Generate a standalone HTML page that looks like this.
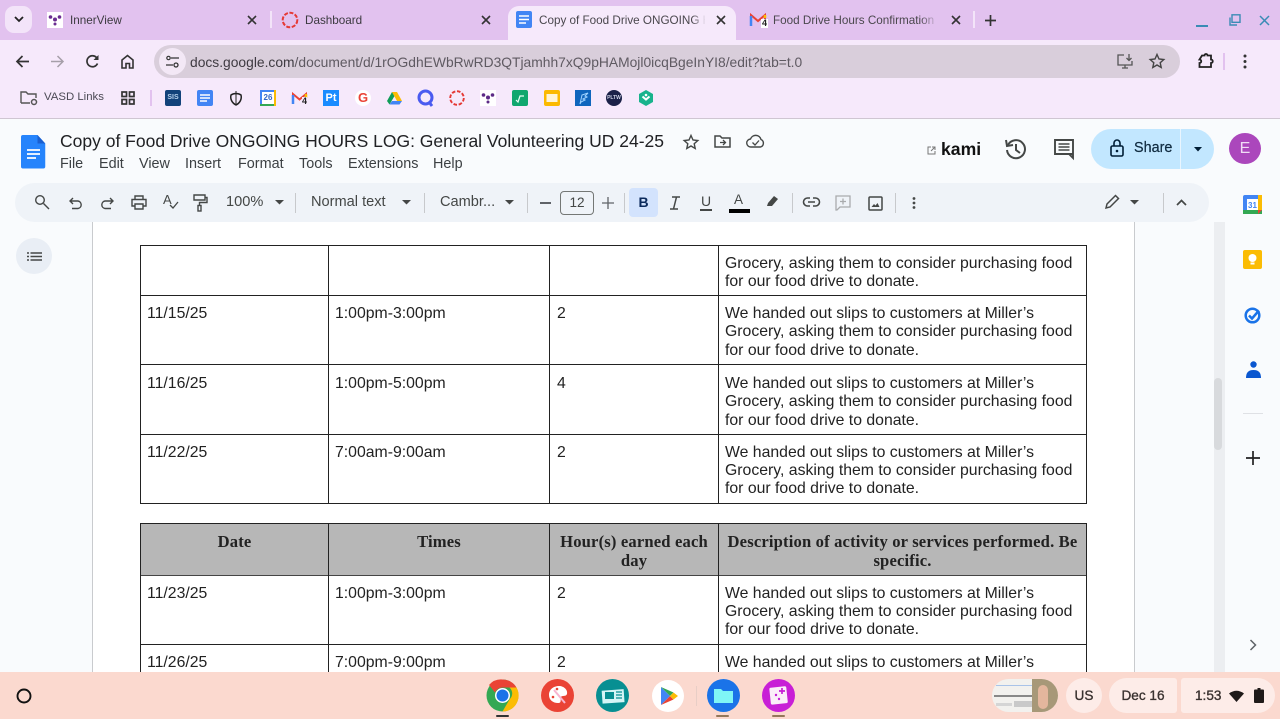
<!DOCTYPE html>
<html><head><meta charset="utf-8"><style>
html,body{margin:0;padding:0;width:1280px;height:719px;overflow:hidden;background:#f9fbfd;font-family:"Liberation Sans",sans-serif;color:#202124}
.a{position:absolute}
.t{position:absolute;white-space:nowrap}
svg{position:absolute;overflow:visible}
.ln{position:absolute;background:#222}
.c{position:absolute;font-size:15.8px;line-height:18.3px;color:#222;white-space:nowrap}
.h{position:absolute;font-family:"Liberation Serif",serif;font-weight:bold;font-size:16.6px;letter-spacing:.16px;line-height:19px;color:#222;text-align:center;white-space:nowrap}
.i{fill:none;stroke:#444746;stroke-width:1.4}
.m{position:absolute;top:156px;font-size:14.4px;color:#3c4043;white-space:nowrap}
.tb{position:absolute;top:194px;font-size:14.6px;color:#444746;white-space:nowrap}
.sep{position:absolute;top:193px;width:1px;height:20px;background:#c7c9cc}
.tab{position:absolute;top:14px;font-size:11.7px;color:#3c3a40;white-space:nowrap}
.st{-webkit-text-stroke:.35px #3a3230;color:#3a3230;font-size:13.6px}
</style></head><body>

<!-- tab strip -->
<div class="a" style="left:0;top:0;width:1280px;height:40px;background:#e2c2ef"></div>
<div class="a" style="left:0;top:40px;width:1280px;height:79px;background:#f6e9fb"></div>
<div class="a" style="left:0;top:118px;width:1280px;height:1px;background:#cfc6d2"></div>
<div class="a" style="left:5px;top:6px;width:27px;height:27px;border-radius:9px;background:#f3e4f9"></div>
<svg style="left:14px;top:16px" width="10" height="7"><path d="M1 1l4 4 4-4" fill="none" stroke="#222" stroke-width="1.8"/></svg>
<!-- active tab -->
<div class="a" style="left:508px;top:6px;width:228px;height:36px;background:#f6e9fb;border-radius:11px 11px 0 0"></div>

<div class="a" style="left:47px;top:12px;width:16px;height:16px;background:#fff"></div>
<svg style="left:47px;top:12px" width="16" height="16"><circle cx="3.5" cy="5" r="1.8" fill="#6a2c91"/><circle cx="12.5" cy="5" r="1.8" fill="#6a2c91"/><circle cx="8" cy="7.5" r="2" fill="#6a2c91"/><circle cx="8" cy="12" r="1.5" fill="#6a2c91"/></svg>
<div class="tab" style="left:70px">InnerView</div>
<svg style="left:247px;top:15px" width="10" height="10"><path d="M1 1l8 8M9 1l-8 8" stroke="#333" stroke-width="1.6"/></svg>
<div class="a" style="left:270px;top:11px;width:2px;height:17px;background:#f3e4f9"></div>
<svg style="left:281px;top:11px" width="18" height="18"><circle cx="9" cy="9" r="7.3" fill="none" stroke="#e53935" stroke-width="2" stroke-dasharray="4 1.6"/></svg>
<div class="tab" style="left:305px">Dashboard</div>
<svg style="left:481px;top:15px" width="10" height="10"><path d="M1 1l8 8M9 1l-8 8" stroke="#333" stroke-width="1.6"/></svg>

<svg style="left:516px;top:11px" width="16" height="17"><rect width="16" height="17" rx="2" fill="#4285f4"/><path d="M3 5h10M3 8.5h10M3 12h7" stroke="#fff" stroke-width="1.5"/></svg>
<div class="tab" style="left:539px;width:166px;overflow:hidden;color:#4a474d">Copy of Food Drive ONGOING H</div>
<div class="a" style="left:692px;top:12px;width:14px;height:16px;background:linear-gradient(90deg,rgba(246,233,251,0),#f6e9fb)"></div>
<svg style="left:716px;top:15px" width="10" height="10"><path d="M1 1l8 8M9 1l-8 8" stroke="#333" stroke-width="1.6"/></svg>

<svg style="left:750px;top:13px" width="16" height="14"><path d="M1 13V2l7 6 7-6v11" fill="none" stroke="#ea4335" stroke-width="2"/><path d="M1 13V3" stroke="#4285f4" stroke-width="2.5"/><path d="M15 5V2" stroke="#fbbc04" stroke-width="2.5"/><path d="M13 7v6" stroke="#34a853" stroke-width="2.5"/></svg>
<div class="t" style="left:761px;top:19px;font-size:9px;font-weight:bold;color:#222;background:#fff;line-height:9px;padding:0 1px">4</div>
<div class="tab" style="left:773px;width:165px;overflow:hidden;color:#4a474d">Food Drive Hours Confirmation</div>
<div class="a" style="left:920px;top:12px;width:18px;height:16px;background:linear-gradient(90deg,rgba(226,194,239,0),#e2c2ef)"></div>
<svg style="left:951px;top:15px" width="10" height="10"><path d="M1 1l8 8M9 1l-8 8" stroke="#333" stroke-width="1.6"/></svg>
<div class="a" style="left:973px;top:11px;width:2px;height:17px;background:#f3e4f9"></div>
<svg style="left:985px;top:15px" width="11" height="11"><path d="M5.5 0v11M0 5.5h11" stroke="#333" stroke-width="1.7"/></svg>

<div class="a" style="left:1196px;top:25px;width:12px;height:2px;background:#3a8bb5"></div>
<svg style="left:1229px;top:14px" width="12" height="12"><path d="M3 0.8h8v7.5H3zM1 3.5v7.5h7" fill="none" stroke="#3a8bb5" stroke-width="1.4"/></svg>
<svg style="left:1259px;top:15px" width="11" height="11"><path d="M1 1l9 9M10 1l-9 9" stroke="#3a8bb5" stroke-width="1.5"/></svg>

<!-- nav -->
<svg style="left:15px;top:54px" width="15" height="15"><path d="M14 7.5H2M7.5 2L2 7.5 7.5 13" fill="none" stroke="#333" stroke-width="1.7"/></svg>
<svg style="left:50px;top:54px" width="15" height="15"><path d="M1 7.5h12M7.5 2L13 7.5 7.5 13" fill="none" stroke="#a69fa9" stroke-width="1.5"/></svg>
<svg style="left:85px;top:54px" width="15" height="15"><path d="M12.5 9.5A5.5 5.5 0 1 1 11.5 3.5L13 5" fill="none" stroke="#333" stroke-width="1.7"/><path d="M13.5 1v5h-5z" fill="#333"/></svg>
<svg style="left:120px;top:54px" width="15" height="15"><path d="M2 14V6l5.500-4.500L13 6v8H9.500V9.500h-3.500V14z" fill="none" stroke="#333" stroke-width="1.6"/></svg>
<div class="a" style="left:154px;top:45px;width:1026px;height:33px;border-radius:17px;background:#d9cedb"></div>
<div class="a" style="left:159px;top:48px;width:27px;height:27px;border-radius:50%;background:#f3e8f6"></div>
<svg style="left:166px;top:55px" width="13" height="13"><path d="M5 3h8M0 10h7" stroke="#333" stroke-width="1.3"/><circle cx="10" cy="10" r="2" fill="none" stroke="#333" stroke-width="1.3"/><circle cx="2.500" cy="3" r="1.7" fill="none" stroke="#333" stroke-width="1.2"/></svg>
<div class="t" style="left:190px;top:54px;font-size:13.83px;color:#3e3a41">docs.google.com<span style="color:#5f5a62">/document/d/1rOGdhEWbRwRD3QTjamhh7xQ9pHAMojl0icqBgeInYI8/edit?tab=t.0</span></div>
<svg style="left:1117px;top:53px" width="16" height="16"><path d="M7 2H1v10h14V8M5 15h6M8 12v3" fill="none" stroke="#555" stroke-width="1.3"/><path d="M12 1v6M9.500 5l2.500 2.500L14.500 5" fill="none" stroke="#555" stroke-width="1.3"/></svg>
<svg style="left:1149px;top:53px" width="16" height="16"><path d="M8 1.500l2 4.500 4.800.5-3.600 3.200 1 4.800L8 12l-4.200 2.500 1-4.800L1.200 6.500 6 6z" fill="none" stroke="#444" stroke-width="1.4"/></svg>
<svg style="left:1198px;top:53px" width="16" height="16"><path d="M5 2.500h2.500a1.500 1.500 0 0 1 3 0H14v4a1.500 1.500 0 0 1 0 3.500v4H2.500v-4a1.500 1.500 0 0 0 0-3.500z" transform="translate(-1 0)" fill="none" stroke="#222" stroke-width="1.8"/></svg>
<div class="a" style="left:1223px;top:53px;width:2px;height:17px;background:#e2c2ef"></div>
<svg style="left:1243px;top:54px" width="4" height="15"><circle cx="2" cy="2" r="1.5" fill="#333"/><circle cx="2" cy="7.5" r="1.5" fill="#333"/><circle cx="2" cy="13" r="1.5" fill="#333"/></svg>

<!-- bookmarks -->
<svg style="left:20px;top:90px" width="19" height="17"><path d="M1 13V2h5l2 2h8v4M1 13h9" fill="none" stroke="#555" stroke-width="1.4"/><circle cx="14" cy="12" r="2.5" fill="none" stroke="#555" stroke-width="1.5"/></svg>
<div class="t" style="left:44px;top:91px;font-size:11.4px;color:#4c4a55;font-weight:500">VASD Links</div>
<svg style="left:121px;top:91px" width="14" height="14"><g fill="none" stroke="#333" stroke-width="1.7"><rect x="1" y="1" width="4.500" height="4.500"/><rect x="8.500" y="1" width="4.500" height="4.500"/><rect x="1" y="8.500" width="4.500" height="4.500"/><rect x="8.500" y="8.500" width="4.500" height="4.500"/></g></svg>
<div class="a" style="left:150px;top:90px;width:2px;height:16px;background:#e2c2ef"></div>
<div class="t" style="left:165px;top:90px;width:16px;height:16px;background:#12437a;border-radius:2px;color:#b9d4ee;font-size:7px;font-weight:bold;line-height:16px;text-align:center">SIS</div>
<svg style="left:197px;top:90px" width="16" height="16"><rect width="16" height="16" rx="2" fill="#4285f4"/><path d="M3 5h10M3 8h10M3 11h7" stroke="#fff" stroke-width="1.5"/></svg>
<svg style="left:229px;top:90px" width="14" height="16"><path d="M2 5c3-2 7-2 10 0 1 4-1 8-5 10-4-2-6-6-5-10z" fill="none" stroke="#222" stroke-width="1.5"/><path d="M7 1v4M7 5v9" stroke="#222"/></svg>
<div class="a" style="left:260px;top:90px;width:16px;height:16px;background:#4285f4"></div>
<div class="t" style="left:262px;top:92px;width:12px;height:12px;background:#fff;color:#3367c8;font-size:8px;font-weight:bold;line-height:12px;text-align:center">26</div>
<div class="a" style="left:260px;top:104px;width:16px;height:2px;background:#34a853"></div>
<div class="a" style="left:274px;top:90px;width:2px;height:16px;background:#fbbc04"></div>
<svg style="left:292px;top:92px" width="15" height="13"><path d="M1 12V2l6.500 5.500L14 2v10" fill="none" stroke="#ea4335" stroke-width="2"/><path d="M1 12V3" stroke="#4285f4" stroke-width="2.5"/><path d="M14 6V2" stroke="#fbbc04" stroke-width="2.5"/></svg>
<div class="t" style="left:302px;top:97px;font-size:9px;font-weight:bold;line-height:9px;background:#f6e9fb;color:#222">4</div>
<div class="t" style="left:323px;top:90px;width:16px;height:16px;background:#1a8cff;color:#fff;font-size:11px;font-weight:bold;line-height:16px;text-align:center">Pt</div>
<div class="t" style="left:355px;top:90px;width:16px;height:16px;border-radius:50%;background:#fff;color:#ea4335;font-size:13px;font-weight:bold;line-height:16px;text-align:center">G</div>
<svg style="left:387px;top:91px" width="15" height="14"><path d="M5 1L0 10l2.500 3.500L7.500 5z" fill="#0f9d58"/><path d="M5 1h5l5 9H10z" fill="#fbbc04"/><path d="M15 10l-2.500 3.500h-10L5 10z" fill="#4285f4"/></svg>
<svg style="left:417px;top:89px" width="17" height="18"><circle cx="8.500" cy="8.500" r="6.500" fill="none" stroke="#4a5bf0" stroke-width="3"/><path d="M12 13l3 4" stroke="#4a5bf0" stroke-width="3"/></svg>
<svg style="left:449px;top:90px" width="16" height="16"><circle cx="8" cy="8" r="6.800" fill="none" stroke="#e53935" stroke-width="1.9" stroke-dasharray="3.600 1.700"/></svg>
<div class="a" style="left:480px;top:90px;width:16px;height:16px;background:#fff"></div>
<svg style="left:480px;top:90px" width="16" height="16"><circle cx="3.5" cy="5" r="1.8" fill="#5c2a86"/><circle cx="12.5" cy="5" r="1.8" fill="#5c2a86"/><circle cx="8" cy="7.5" r="2" fill="#5c2a86"/><circle cx="8" cy="12" r="1.5" fill="#5c2a86"/></svg>
<svg style="left:512px;top:90px" width="16" height="16"><rect width="16" height="16" rx="2" fill="#0fa76e"/><path d="M4 10l2 2 2-6h4" fill="none" stroke="#e6fff4" stroke-width="1.2"/></svg>
<svg style="left:544px;top:90px" width="16" height="16"><rect width="16" height="16" rx="2" fill="#fbb900"/><rect x="2.500" y="4" width="11" height="8" fill="#fff4d5"/></svg>
<svg style="left:575px;top:90px" width="16" height="16"><rect width="16" height="16" fill="#0f66bd"/><path d="M5 14L7 5l6-2-3 3 2 1-4 2 2 1-4 2z" fill="none" stroke="#9ed3ff" stroke-width="1"/></svg>
<div class="t" style="left:606px;top:90px;width:16px;height:16px;border-radius:50%;background:#1b2148;color:#cfd3e6;font-size:5px;font-weight:bold;line-height:16px;text-align:center">PLTW</div>
<svg style="left:639px;top:90px" width="14" height="16"><path d="M7 0l7 4v8l-7 4-7-4V4z" fill="#18b38c"/><path d="M3.500 6.500L7 9.500l3.500-3" fill="none" stroke="#fff" stroke-width="2"/><circle cx="7" cy="5" r="1.3" fill="#fff"/></svg>

<!-- docs header -->
<svg style="left:21px;top:135px" width="26" height="34"><path d="M2 0h15l8 8.500V31.500a2 2 0 0 1-2 2H2a2 2 0 0 1-2-2V2a2 2 0 0 1 2-2z" fill="#2684fc" transform="scale(.97 1)"/><path d="M17 0l8 8.500h-8z" fill="#1a5fd0" transform="scale(.97 1)"/><path d="M6 15h13M6 19h13M6 23h9" stroke="#fff" stroke-width="1.7"/></svg>
<div class="t" style="left:60px;top:131px;font-size:17.5px;line-height:21px;color:#202124">Copy of Food Drive ONGOING HOURS LOG: General Volunteering UD 24-25</div>
<div class="m" style="left:60px">File</div>
<div class="m" style="left:99px">Edit</div>
<div class="m" style="left:139px">View</div>
<div class="m" style="left:185px">Insert</div>
<div class="m" style="left:238px">Format</div>
<div class="m" style="left:299px">Tools</div>
<div class="m" style="left:348px">Extensions</div>
<div class="m" style="left:433px">Help</div>
<svg style="left:683px;top:134px" width="16" height="16"><path d="M8 1.500l2 4.500 4.800.5-3.600 3.200 1 4.800L8 12l-4.200 2.500 1-4.800L1.200 6.500 6 6z" fill="none" stroke="#444746" stroke-width="1.4"/></svg>
<svg style="left:714px;top:134px" width="17" height="15"><path d="M1 13V2h5l2 2h8v9z" fill="none" stroke="#444746" stroke-width="1.5"/><path d="M6 8.500h5M9 6l2.500 2.500L9 11" fill="none" stroke="#444746" stroke-width="1.3"/></svg>
<svg style="left:746px;top:134px" width="19" height="15"><path d="M5 13a4 4 0 0 1-.5-8A5.500 5.500 0 0 1 15 5.500 4 4 0 0 1 14.500 13z" fill="none" stroke="#444746" stroke-width="1.4"/><path d="M6.500 8.500l2.500 2.500 4-4.500" fill="none" stroke="#444746" stroke-width="1.3"/></svg>
<svg style="left:927px;top:146px" width="9" height="9"><path d="M4 1H1v7h7V5M5 1h3v3M8 1L4 5" fill="none" stroke="#777" stroke-width="1"/></svg>
<div class="t" style="left:941px;top:139px;font-size:17.6px;line-height:20px;font-weight:bold;color:#111">kami</div>
<svg style="left:1005px;top:138px" width="22" height="22"><path d="M3 7A9 9 0 1 1 2 12" fill="none" stroke="#444746" stroke-width="2"/><path d="M1 2l1 6 6-1M11 6v6l4 3" fill="none" stroke="#444746" stroke-width="2"/></svg>
<svg style="left:1054px;top:139px" width="21" height="20"><path d="M1 1h18v14H1zM15 15l4 4v-4" fill="none" stroke="#444746" stroke-width="1.9"/><path d="M4.500 5h11M4.500 8h11M4.500 11h11" stroke="#444746" stroke-width="1.5"/></svg>
<div class="a" style="left:1091px;top:129px;width:123px;height:40px;border-radius:20px;background:#c2e7ff"></div>
<div class="a" style="left:1180px;top:129px;width:1px;height:40px;background:#e9f5fe"></div>
<svg style="left:1110px;top:139px" width="14" height="18"><rect x="1" y="7" width="12" height="10" rx="1.5" fill="none" stroke="#001d35" stroke-width="1.6"/><path d="M4 7V4a3 3 0 0 1 6 0v3" fill="none" stroke="#001d35" stroke-width="1.6"/><circle cx="7" cy="12" r="1.3" fill="#001d35"/></svg>
<div class="t" style="left:1134px;top:140px;font-size:14.4px;color:#0f2a3f;-webkit-text-stroke:.2px #0f2a3f">Share</div>
<svg style="left:1194px;top:147px" width="8" height="5"><path d="M0 0h8L4 4.500z" fill="#001d35"/></svg>
<div class="a" style="left:1229px;top:133px;width:32px;height:31px;border-radius:50%;background:#ab47bc;color:#f0dcf5;font-size:16px;line-height:31px;text-align:center">E</div>

<!-- toolbar pill -->
<div class="a" style="left:15px;top:183px;width:1194px;height:39px;border-radius:20px;background:#eff3f8"></div>
<svg style="left:34px;top:194px" width="16" height="16"><circle cx="6" cy="6" r="4.300" class="i"/><path d="M9.500 9.500L15 15" class="i"/></svg>
<svg style="left:69px;top:196px" width="14" height="14"><path d="M1 5h8a3.800 3.800 0 0 1 0 7.500H3M4 2L1 5l3 3" class="i"/></svg>
<svg style="left:100px;top:196px" width="14" height="14"><path d="M13 5H5a3.800 3.800 0 0 0 0 7.500h6M10 2l3 3-3 3" class="i"/></svg>
<svg style="left:131px;top:195px" width="16" height="15"><path d="M4 4V1h8v3M4 11H1V4.500h14V11h-3M4 9h8v5H4z" class="i"/></svg>
<div class="t" style="left:163px;top:192px;font-size:13px;color:#444746">A</div>
<svg style="left:169px;top:201px" width="10" height="9"><path d="M1 4l3 3 5-6" class="i" style="stroke-width:1.3"/></svg>
<svg style="left:193px;top:194px" width="15" height="18"><path d="M1 1h11v5H1zM12 3.500h2v5H6.500v3" class="i"/><rect x="5" y="11.500" width="3" height="5.500" class="i"/></svg>
<div class="tb" style="left:226px">100%</div>
<svg style="left:275px;top:200px" width="9" height="5"><path d="M0 0h9L4.500 4.500z" fill="#444746"/></svg>
<div class="sep" style="left:295px"></div>
<div class="tb" style="left:311px">Normal text</div>
<svg style="left:402px;top:200px" width="9" height="5"><path d="M0 0h9L4.500 4.500z" fill="#444746"/></svg>
<div class="sep" style="left:424px"></div>
<div class="tb" style="left:440px">Cambr...</div>
<svg style="left:505px;top:200px" width="9" height="5"><path d="M0 0h9L4.500 4.500z" fill="#444746"/></svg>
<div class="sep" style="left:527px"></div>
<div class="a" style="left:540px;top:202px;width:11px;height:1.5px;background:#5f6368"></div>
<div class="a" style="left:560px;top:191px;width:32px;height:22px;border:1px solid #747775;border-radius:4px;color:#444746;font-size:13.6px;line-height:21px;text-align:center">12</div>
<svg style="left:602px;top:197px" width="12" height="12"><path d="M6 0v12M0 6h12" stroke="#5f6368" stroke-width="1.3"/></svg>
<div class="sep" style="left:624px"></div>
<div class="a" style="left:629px;top:188px;width:29px;height:29px;border-radius:4px;background:#d3e3fd;color:#0b2a5c;font-size:14px;font-weight:bold;line-height:29px;text-align:center">B</div>
<svg style="left:669px;top:196px" width="12" height="14"><path d="M3 1h8M1 13h8M7.500 1l-3 12" fill="none" stroke="#444746" stroke-width="1.5"/></svg>
<div class="t" style="left:701px;top:193px;font-size:14px;color:#444746">U</div>
<div class="a" style="left:700px;top:209px;width:12px;height:1.5px;background:#444746"></div>
<div class="t" style="left:734px;top:192px;font-size:13.5px;color:#444746">A</div>
<div class="a" style="left:729px;top:209px;width:21px;height:3.5px;background:#000"></div>
<svg style="left:766px;top:194px" width="14" height="14"><path d="M1 12l1-3 6-7 4 3-6 7z" fill="#444746"/></svg>
<div class="sep" style="left:792px"></div>
<svg style="left:803px;top:197px" width="17" height="11"><path d="M7 1H4.500a4 4 0 0 0 0 8H7M10 1h2.500a4 4 0 0 1 0 8H10M5 5h7" fill="none" stroke="#444746" stroke-width="1.6"/></svg>
<svg style="left:835px;top:195px" width="16" height="16"><path d="M1 1h14v11H5l-3 3H1z" fill="none" stroke="#a9abad" stroke-width="1.3"/><path d="M8 3.500v6M5 6.500h6" stroke="#a9abad" stroke-width="1.3"/></svg>
<svg style="left:868px;top:196px" width="15" height="15"><rect x="1" y="1" width="13" height="13" rx="1" fill="none" stroke="#444746" stroke-width="1.5"/><path d="M3.500 11l2.500-3 1.500 1.500L9.500 7l2 4z" fill="#444746"/></svg>
<div class="sep" style="left:895px"></div>
<svg style="left:912px;top:197px" width="4" height="12"><circle cx="2" cy="1.500" r="1.4" fill="#444746"/><circle cx="2" cy="6" r="1.4" fill="#444746"/><circle cx="2" cy="10.500" r="1.4" fill="#444746"/></svg>
<svg style="left:1105px;top:194px" width="15" height="15"><path d="M1 14l1-4 8.500-8.500 3 3L5 13z" fill="none" stroke="#444746" stroke-width="1.5"/></svg>
<svg style="left:1130px;top:200px" width="9" height="5"><path d="M0 0h9L4.500 4.500z" fill="#444746"/></svg>
<div class="sep" style="left:1163px;top:193px"></div>
<svg style="left:1176px;top:199px" width="11" height="7"><path d="M1 6l4.500-4.500L10 6" fill="none" stroke="#444746" stroke-width="1.7"/></svg>

<!-- doc -->
<div class="a" style="left:92px;top:222px;width:1043px;height:450px;background:#fff;border-left:1px solid #c9cbce;border-right:1px solid #c9cbce;box-sizing:border-box"></div>
<div class="a" style="left:1214px;top:222px;width:11px;height:450px;background:#eceef1"></div>
<div class="a" style="left:1214px;top:378px;width:8px;height:72px;border-radius:4px;background:#d8dadd"></div>
<div class="a" style="left:16px;top:238px;width:36px;height:36px;border-radius:50%;background:#e9eef5"></div>
<svg style="left:27px;top:252px" width="15" height="9"><path d="M3.500 1H15M3.500 4.500H15M3.500 8H15M0 1h2M0 4.500h2M0 8h2" stroke="#444746" stroke-width="1.4"/></svg>

<!-- table 1 lines -->
<div class="ln" style="left:140px;top:245px;width:947px;height:1px"></div>
<div class="ln" style="left:140px;top:295px;width:947px;height:1px"></div>
<div class="ln" style="left:140px;top:364px;width:947px;height:1px"></div>
<div class="ln" style="left:140px;top:434px;width:947px;height:1px"></div>
<div class="ln" style="left:140px;top:503px;width:947px;height:1px"></div>
<div class="ln" style="left:140px;top:245px;width:1px;height:259px"></div>
<div class="ln" style="left:328px;top:245px;width:1px;height:259px"></div>
<div class="ln" style="left:549px;top:245px;width:1px;height:259px"></div>
<div class="ln" style="left:718px;top:245px;width:1px;height:259px"></div>
<div class="ln" style="left:1086px;top:245px;width:1px;height:259px"></div>

<div class="c" style="left:725px;top:255px">Grocery, asking them to consider purchasing food<br>for our food drive to donate.</div>
<div class="c" style="left:147px;top:305px">11/15/25</div><div class="c" style="left:335px;top:305px">1:00pm-3:00pm</div><div class="c" style="left:557px;top:305px">2</div>
<div class="c" style="left:725px;top:305px">We handed out slips to customers at Miller’s<br>Grocery, asking them to consider purchasing food<br>for our food drive to donate.</div>
<div class="c" style="left:147px;top:375px">11/16/25</div><div class="c" style="left:335px;top:375px">1:00pm-5:00pm</div><div class="c" style="left:557px;top:375px">4</div>
<div class="c" style="left:725px;top:375px">We handed out slips to customers at Miller’s<br>Grocery, asking them to consider purchasing food<br>for our food drive to donate.</div>
<div class="c" style="left:147px;top:443.5px">11/22/25</div><div class="c" style="left:335px;top:443.5px">7:00am-9:00am</div><div class="c" style="left:557px;top:443.5px">2</div>
<div class="c" style="left:725px;top:443.5px">We handed out slips to customers at Miller’s<br>Grocery, asking them to consider purchasing food<br>for our food drive to donate.</div>

<!-- table 2 -->
<div class="a" style="left:140px;top:523px;width:947px;height:52px;background:#b7b7b7"></div>
<div class="ln" style="left:140px;top:523px;width:947px;height:1px"></div>
<div class="ln" style="left:140px;top:575px;width:947px;height:1px;background:#444"></div>
<div class="ln" style="left:140px;top:644px;width:947px;height:1px"></div>
<div class="ln" style="left:140px;top:523px;width:1px;height:149px"></div>
<div class="ln" style="left:328px;top:523px;width:1px;height:149px"></div>
<div class="ln" style="left:549px;top:523px;width:1px;height:149px"></div>
<div class="ln" style="left:718px;top:523px;width:1px;height:149px"></div>
<div class="ln" style="left:1086px;top:523px;width:1px;height:149px"></div>
<div class="h" style="left:141px;top:532px;width:187px">Date</div>
<div class="h" style="left:329px;top:532px;width:220px">Times</div>
<div class="h" style="left:550px;top:532px;width:168px">Hour(s) earned each<br>day</div>
<div class="h" style="left:719px;top:532px;width:367px">Description of activity or services performed. Be<br>specific.</div>
<div class="c" style="left:147px;top:584.5px">11/23/25</div><div class="c" style="left:335px;top:584.5px">1:00pm-3:00pm</div><div class="c" style="left:557px;top:584.5px">2</div>
<div class="c" style="left:725px;top:584.5px">We handed out slips to customers at Miller’s<br>Grocery, asking them to consider purchasing food<br>for our food drive to donate.</div>
<div class="c" style="left:147px;top:653.5px">11/26/25</div><div class="c" style="left:335px;top:653.5px">7:00pm-9:00pm</div><div class="c" style="left:557px;top:653.5px">2</div>
<div class="c" style="left:725px;top:653.5px">We handed out slips to customers at Miller’s</div>

<!-- side panel -->
<svg style="left:1243px;top:195px" width="19" height="19"><rect width="19" height="19" rx="2" fill="#4285f4"/><rect x="0" y="15" width="19" height="4" fill="#34a853"/><rect x="15" y="0" width="4" height="15" fill="#fbbc04"/><rect x="4" y="4" width="11" height="11" fill="#fff"/><path d="M15 19l4-4h-4z" fill="#ea4335"/><text x="9.500" y="13" font-size="8" font-weight="bold" fill="#4285f4" text-anchor="middle" font-family="Liberation Sans">31</text></svg>
<svg style="left:1243px;top:250px" width="19" height="19"><rect width="19" height="19" rx="2" fill="#fbbc04"/><circle cx="9.500" cy="8" r="4" fill="#fff"/><rect x="7.500" y="12.500" width="4" height="2" fill="#fff"/></svg>
<svg style="left:1244px;top:306px" width="18" height="18"><circle cx="8.500" cy="9.500" r="6.800" fill="none" stroke="#1a73e8" stroke-width="2.5"/><path d="M5 9.500l3 3 7-8" fill="none" stroke="#1a73e8" stroke-width="2.5"/></svg>
<svg style="left:1246px;top:361px" width="15" height="17"><circle cx="7.500" cy="3.500" r="3.200" fill="#0b57d0"/><path d="M0 17c0-5 2-8 7.500-8s7.500 3 7.500 8z" fill="#0b57d0"/></svg>
<div class="a" style="left:1243px;top:413px;width:20px;height:1px;background:#dfe1e5"></div>
<svg style="left:1246px;top:451px" width="14" height="14"><path d="M7 0v14M0 7h14" stroke="#222" stroke-width="1.7"/></svg>
<svg style="left:1249px;top:639px" width="8" height="12"><path d="M1.500 1l5 5-5 5" fill="none" stroke="#5f6368" stroke-width="1.5"/></svg>

<!-- shelf -->
<div class="a" style="left:0;top:672px;width:1280px;height:47px;background:#fbd9cf"></div>
<svg style="left:16px;top:688px" width="16" height="16"><circle cx="8" cy="8" r="6.500" fill="none" stroke="#111" stroke-width="1.9"/></svg>

<svg style="left:486px;top:679px" width="33" height="33"><circle cx="16.500" cy="16.500" r="16" fill="#34a853"/><path d="M16.500.5a16 16 0 0 1 14 8H16.500a8 8 0 0 0-7.500 5L3 6A16 16 0 0 1 16.500.5z" fill="#ea4335"/><path d="M30.500 8.500a16 16 0 0 1-14 24l7-12a8 8 0 0 0 0-12z" fill="#fbbc04"/><circle cx="16.500" cy="16.500" r="7.500" fill="#fff"/><circle cx="16.500" cy="16.500" r="6" fill="#1a73e8"/></svg>
<div class="a" style="left:496px;top:715px;width:13px;height:2px;background:#333;border-radius:1px"></div>
<svg style="left:541px;top:679px" width="33" height="33"><circle cx="16.500" cy="16.500" r="16.500" fill="#ea4335"/><path d="M8 16c0-6 5-9 10-9s9 4 8 8c-1 3-5 1-6 3-1 3 1 6-3 6-5 0-9-3-9-8z" fill="#fff"/><path d="M13 11l11 13" stroke="#f8b4d0" stroke-width="2"/><circle cx="12" cy="18" r="1.3" fill="#ea4335"/><circle cx="16" cy="10" r="1.3" fill="#ea4335"/></svg>
<svg style="left:596px;top:679px" width="33" height="33"><circle cx="16.500" cy="16.500" r="16.500" fill="#078f92"/><rect x="6" y="11" width="22" height="13" fill="#d5f5f6" transform="rotate(-4 16 16)"/><rect x="9" y="13" width="9" height="7" fill="#078f92"/><path d="M20 13h6M20 16h6M20 19h6" stroke="#078f92" stroke-width="1.2"/></svg>
<svg style="left:652px;top:680px" width="32" height="32"><circle cx="16" cy="16" r="16" fill="#fff"/><path d="M9 7v18l9-9z" fill="#4285f4"/><path d="M9 7l9 9 3.500-3.500z" fill="#34a853"/><path d="M9 25l9-9 3.500 3.500z" fill="#ea4335"/><path d="M21.500 12.500L26 16l-4.500 3.500L18 16z" fill="#fbbc04"/></svg>
<div class="a" style="left:696px;top:686px;width:1px;height:20px;background:#e8cec6"></div>
<svg style="left:707px;top:679px" width="33" height="33"><circle cx="16.500" cy="16.500" r="16.500" fill="#1a73e8"/><path d="M7 10h7l2 2h10v12H7z" fill="#7ff6f6"/></svg>
<div class="a" style="left:716px;top:715px;width:13px;height:2px;background:#94775a;border-radius:1px"></div>
<svg style="left:762px;top:679px" width="33" height="33"><circle cx="16.500" cy="16.500" r="16.500" fill="#c81fd6"/><rect x="8" y="8" width="17" height="17" rx="1.500" fill="#fbeef9" transform="rotate(-6 16 16)"/><path d="M20 9v6M17 12h6" stroke="#c81fd6" stroke-width="1.7"/><circle cx="14" cy="16" r="1.2" fill="#c81fd6"/><circle cx="17" cy="20" r="1.2" fill="#c81fd6"/></svg>
<div class="a" style="left:772px;top:715px;width:13px;height:2px;background:#94775a;border-radius:1px"></div>

<div class="a" style="left:992px;top:679px;width:66px;height:33px;border-radius:17px;background:#f2f1ee;overflow:hidden">
<div class="a" style="left:4px;top:6px;width:38px;height:1px;background:#a9c3e8"></div>
<div class="a" style="left:2px;top:16px;width:40px;height:2px;background:#888"></div>
<div class="a" style="left:22px;top:22px;width:20px;height:6px;background:#c9c9c9"></div>
<div class="a" style="left:4px;top:24px;width:16px;height:3px;background:#d5d5d5"></div>
<div class="a" style="left:40px;top:0;width:26px;height:33px;background:#a79878"></div>
<div class="a" style="left:46px;top:6px;width:10px;height:24px;border-radius:5px;background:#e3b69d"></div>
</div>
<div class="a st" style="left:1066px;top:678px;width:36px;height:35px;border-radius:50%;background:#fdece8;line-height:35px;text-align:center">US</div>
<div class="a st" style="left:1109px;top:678px;width:68px;height:35px;border-radius:18px 3px 3px 18px;background:#fdece8;line-height:35px;text-align:center">Dec 16</div>
<div class="a" style="left:1181px;top:678px;width:94px;height:35px;border-radius:3px 18px 18px 3px;background:#fdece8"></div>
<div class="t st" style="left:1195px;top:688px">1:53</div>
<svg style="left:1229px;top:690px" width="15" height="12"><path d="M0 3.500Q7.500-2 15 3.500L7.500 12z" fill="#1f1a19"/></svg>
<svg style="left:1254px;top:688px" width="10" height="15"><path d="M3.500 0h3v1.500H9a1 1 0 0 1 1 1V14a1 1 0 0 1-1 1H1a1 1 0 0 1-1-1V2.500a1 1 0 0 1 1-1h2.500z" fill="#1f1a19"/></svg>
</body></html>
